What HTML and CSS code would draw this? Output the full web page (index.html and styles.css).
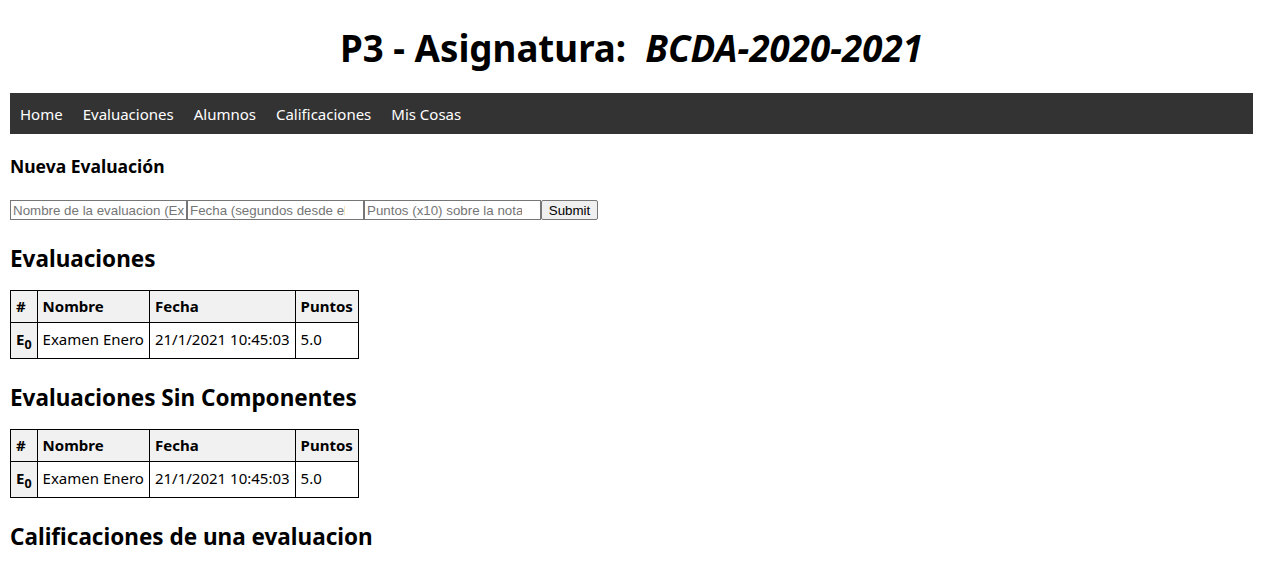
FILE: index.html
```html
<!DOCTYPE html>
<html lang="es">
<head>
<meta charset="utf-8">
<title>P3 - Asignatura</title>
<link rel="stylesheet" href="styles.css">
</head>
<body>
<h1 class="title">P3 - Asignatura:&nbsp; <em>BCDA-2020-2021</em></h1>
<nav class="topnav">
  <a href="#">Home</a><a href="#">Evaluaciones</a><a href="#">Alumnos</a><a href="#">Calificaciones</a><a href="#">Mis Cosas</a>
</nav>
<h3 class="subtitle">Nueva Evaluación</h3>
<form class="form"><input class="field" type="text" placeholder="Nombre de la evaluacion (Ex: Examen Enero)"><input class="field num" type="number" placeholder="Fecha (segundos desde el Epoch)"><input class="field num" type="number" placeholder="Puntos (x10) sobre la nota final"><input class="send" type="submit" value="Submit"></form>
<h2 class="section">Evaluaciones</h2>
<table class="grid">
  <thead><tr><th>#</th><th>Nombre</th><th>Fecha</th><th>Puntos</th></tr></thead>
  <tbody><tr><th>E<sub>0</sub></th><td>Examen Enero</td><td>21/1/2021 10:45:03</td><td>5.0</td></tr></tbody>
</table>
<h2 class="section">Evaluaciones Sin Componentes</h2>
<table class="grid">
  <thead><tr><th>#</th><th>Nombre</th><th>Fecha</th><th>Puntos</th></tr></thead>
  <tbody><tr><th>E<sub>0</sub></th><td>Examen Enero</td><td>21/1/2021 10:45:03</td><td>5.0</td></tr></tbody>
</table>
<h2 class="section">Calificaciones de una evaluacion</h2>
</body>
</html>
```
FILE: styles.css
```css
body {
  margin: 0 8px 0 10px;
  font-family: "Segoe UI", "Noto Sans", "Open Sans", sans-serif;
  font-size: 15px;
  color: #000;
  background: #fff;
}
.title {
  text-align: center;
  font-size: 36.7px;
  font-weight: bold;
  margin: 0;
  padding: 22px 0 18px;
  line-height: 53px;
}
.title em { font-style: italic; }
.topnav {
  display: flex;
  background: #333;
  height: 41px;
  align-items: center;
}
.topnav a {
  color: #fff;
  text-decoration: none;
  padding: 0 10px;
  font-size: 15px;
}
.subtitle {
  font-size: 17.5px;
  margin: 20px 0 0;
  line-height: 25px;
}
.form {
  display: flex;
  margin: 21px 0 0;
}
.field {
  width: 177px;
  box-sizing: border-box;
  height: 20px;
  border: 1px solid #767676;
  padding: 1px 2px;
  font-family: Arial, "Liberation Sans", sans-serif;
  font-size: 13.33px;
  margin: 0;
}
.field::placeholder { color: #757575; }
.num {
  padding-right: 18px;
  -moz-appearance: textfield;
}
.num::-webkit-inner-spin-button,
.num::-webkit-outer-spin-button {
  -webkit-appearance: none;
  display: none;
  margin: 0;
}
.send {
  width: 57px;
  height: 20px;
  box-sizing: border-box;
  margin: 0;
  padding: 0 6px;
  font-family: Arial, "Liberation Sans", sans-serif;
  font-size: 13.33px;
  background: #efefef;
  border: 1px solid #767676;
  border-radius: 2px;
}
.section {
  font-size: 22.5px;
  margin: 23px 0 15px;
  line-height: 32px;
}
.grid {
  border-collapse: collapse;
}
.grid th, .grid td {
  border: 1px solid #000;
  padding: 5px;
  text-align: left;
  line-height: 21px;
}
.grid thead th, .grid tbody th {
  background: #f1f1f1;
}
.grid tbody td, .grid tbody th { padding: 6px 5px 8px; }
.grid sub {
  font-size: 12.5px;
  vertical-align: -4px;
  line-height: 0;
}
```
